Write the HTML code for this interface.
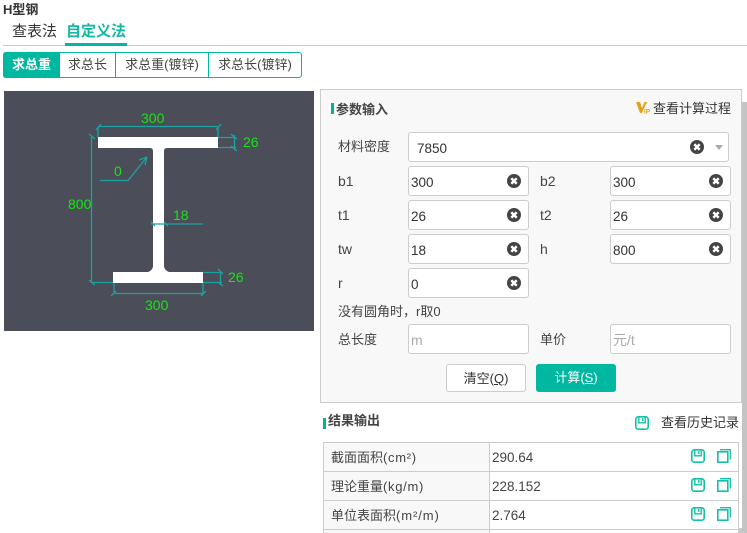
<!DOCTYPE html>
<html lang="zh">
<head>
<meta charset="utf-8">
<style>
html,body{margin:0;padding:0;background:#fff;}
body{width:747px;height:533px;overflow:hidden;position:relative;font-family:"Liberation Sans","Noto Sans CJK SC",sans-serif;font-size:13px;color:#333;}
.a{position:absolute;white-space:nowrap;}
.inp{position:absolute;box-sizing:border-box;width:121px;height:30px;background:#fff;border:1px solid #ccc;border-radius:3px;font-size:13.5px;line-height:31px;padding-left:2px;color:#333;}
.ph{color:#aaa;font-size:14px;}
.x{position:absolute;width:14px;height:14px;}
.lb{position:absolute;font-size:13px;line-height:16px;color:#444;white-space:nowrap;}
.ll{font-size:14px;margin-top:-1px;}
.btn{position:absolute;top:52px;height:26px;box-sizing:border-box;text-align:center;font-size:13px;color:#444;}
.cell{position:absolute;box-sizing:border-box;font-size:13px;color:#444;white-space:nowrap;}
.cell span{letter-spacing:.7px;}
</style>
</head>
<body>
<svg width="0" height="0" style="position:absolute">
<symbol id="xi" viewBox="0 0 14 14"><circle cx="7" cy="7" r="7" fill="#444"/><path d="M4.300 4.300L9.700 9.700M9.700 4.300L4.300 9.700" stroke="#fff" stroke-width="2.500" fill="none"/></symbol>
<symbol id="sv" viewBox="0 0 14 14"><rect x=".8" y=".8" width="12.400" height="12.400" rx="2.500" fill="none" stroke="#14c0a8" stroke-width="1.600"/><path d="M3.800 1V6.800H10.200V1M7.800 2V5" fill="none" stroke="#14c0a8" stroke-width="1.400"/></symbol>
<symbol id="cp" viewBox="0 0 14 14"><rect x=".8" y="2.800" width="10" height="10.400" fill="none" stroke="#14c0a8" stroke-width="1.600"/><path d="M3 .7H13.300V10.500" fill="none" stroke="#14c0a8" stroke-width="1.300"/></symbol>
</svg>

<div class="a" style="left:3px;top:2px;font-size:13px;font-weight:bold;line-height:16px;color:#333;">H型钢</div>
<div class="a" style="left:12px;top:23px;font-size:15px;line-height:18px;color:#333;">查表法</div>
<div class="a" style="left:66px;top:23px;font-size:15px;line-height:18px;color:#14b8a0;font-weight:bold;">自定义法</div>
<div class="a" style="left:3px;top:45px;width:744px;height:1px;background:#ccc;"></div>
<div class="a" style="left:65px;top:43px;width:62px;height:3px;background:#00b8a0;"></div>

<div class="a" style="left:3px;top:52px;width:299px;height:26px;box-sizing:border-box;border:1px solid #00b8a0;border-radius:3px;"></div>
<div class="btn" style="left:3px;width:57px;background:#00b8a0;color:#fff;font-weight:bold;border-radius:3px 0 0 3px;line-height:26px;">求总重</div>
<div class="btn" style="left:60px;width:55px;line-height:26px;">求总长</div>
<div class="a" style="left:115px;top:52px;width:1px;height:26px;background:#00b8a0;"></div>
<div class="btn" style="left:116px;width:92px;line-height:26px;">求总重(镀锌)</div>
<div class="a" style="left:208px;top:52px;width:1px;height:26px;background:#00b8a0;"></div>
<div class="btn" style="left:209px;width:92px;line-height:26px;">求总长(镀锌)</div>

<svg class="a" style="left:4px;top:91px;" width="310" height="240" viewBox="4 91 310 240">
<rect x="4" y="91" width="310" height="240" fill="#4b4d58"/>
<path d="M98 137H218V148H167Q164 148 164 151V266Q164 270 169 272H203V283H113V272H148Q153 270 153 266V151Q153 148 150 148H98Z" fill="#fff"/>
<g stroke="#1aa3a3" stroke-width="1.300" fill="none">
<path d="M98 126.500H218M98 127V137M218 127V137M96 130L101 124M216 130L221 124"/>
<path d="M218 137.500H236M218 147.500H236M234.500 135V150M231 134L237 139M231 146L237 151"/>
<path d="M91.500 137V283M89 134L95 139M89 280L95 285M91 282.500H113"/>
<path d="M100 180.500H128L147 157M147 157L139 160M147 157L145 165"/>
<path d="M151 224H203M151 222L155 226M164 222L168 226"/>
<path d="M203 272.500H222M203 282.500H222M220.500 271V285M218 269L223 274M218 282L223 286"/>
<path d="M114 283V294M203 283V294M114 293.500H203M111 296L116 291M201 296L206 291"/>
</g>
<g font-family="Liberation Sans,sans-serif" font-size="14" fill="#14e614">
<text x="141" y="123">300</text>
<text x="243" y="147">26</text>
<text x="68" y="209">800</text>
<text x="114" y="176">0</text>
<text x="173" y="220">18</text>
<text x="228" y="282">26</text>
<text x="145" y="310">300</text>
</g>
</svg>

<div class="a" style="left:320px;top:89px;width:422px;height:314px;box-sizing:border-box;background:#f8f8f8;border:1px solid #ccc;"></div>
<div class="a" style="left:742px;top:102px;width:5px;height:431px;background:#c4c4c4;"></div>
<div class="a" style="left:660px;top:528px;width:82px;height:5px;background:linear-gradient(to right,rgba(196,196,196,0),rgba(196,196,196,.9));"></div>
<div class="a" style="left:331px;top:103px;width:3px;height:11px;background:#00b48c;"></div>
<div class="a" style="left:336px;top:102px;font-size:13px;font-weight:bold;line-height:16px;color:#444;">参数输入</div>
<svg class="a" style="left:636px;top:101px;" width="16" height="14" viewBox="0 0 16 14"><path d="M0 1H4L6 7L8.500 1H11L5.800 12H4Z" fill="#e3a21a"/><text x="8" y="12.500" font-family="Liberation Sans,sans-serif" font-size="6.500" font-weight="bold" fill="#e3a21a">IP</text></svg>
<div class="a" style="left:653px;top:100px;font-size:13px;line-height:18px;color:#333;">查看计算过程</div>

<div class="lb" style="left:338px;top:139px;">材料密度</div>
<div class="inp" style="left:408px;top:132px;width:321px;padding-left:8px;">7850</div>
<svg class="x" style="left:690px;top:140px;"><use href="#xi"/></svg>
<div class="a" style="left:715px;top:145px;width:0;height:0;border-left:4px solid transparent;border-right:4px solid transparent;border-top:5px solid #aaa;"></div>

<div class="lb ll" style="left:338px;top:174px;">b1</div>
<div class="inp" style="left:408px;top:166px;">300</div>
<svg class="x" style="left:507px;top:174px;"><use href="#xi"/></svg>
<div class="lb ll" style="left:540px;top:174px;">b2</div>
<div class="inp" style="left:610px;top:166px;">300</div>
<svg class="x" style="left:709px;top:174px;"><use href="#xi"/></svg>

<div class="lb ll" style="left:338px;top:208px;">t1</div>
<div class="inp" style="left:408px;top:200px;">26</div>
<svg class="x" style="left:507px;top:208px;"><use href="#xi"/></svg>
<div class="lb ll" style="left:540px;top:208px;">t2</div>
<div class="inp" style="left:610px;top:200px;">26</div>
<svg class="x" style="left:709px;top:208px;"><use href="#xi"/></svg>

<div class="lb ll" style="left:338px;top:242px;">tw</div>
<div class="inp" style="left:408px;top:234px;">18</div>
<svg class="x" style="left:507px;top:242px;"><use href="#xi"/></svg>
<div class="lb ll" style="left:540px;top:242px;">h</div>
<div class="inp" style="left:610px;top:234px;">800</div>
<svg class="x" style="left:709px;top:242px;"><use href="#xi"/></svg>

<div class="lb ll" style="left:338px;top:276px;">r</div>
<div class="inp" style="left:408px;top:268px;">0</div>
<svg class="x" style="left:507px;top:276px;"><use href="#xi"/></svg>

<div class="lb" style="left:338px;top:304px;">没有圆角时，r取0</div>

<div class="lb" style="left:338px;top:332px;">总长度</div>
<div class="inp ph" style="left:408px;top:324px;">m</div>
<div class="lb" style="left:540px;top:332px;">单价</div>
<div class="inp ph" style="left:610px;top:324px;">元/t</div>

<div class="a" style="left:446px;top:364px;width:80px;height:28px;box-sizing:border-box;background:#fff;border:1px solid #ccc;border-radius:3px;text-align:center;line-height:27px;font-size:13px;color:#333;">清空(<u style="text-decoration:underline">Q</u>)</div>
<div class="a" style="left:536px;top:364px;width:80px;height:28px;background:#00b8a0;border-radius:3px;text-align:center;line-height:28px;font-size:13px;color:#fff;">计算(<u>S</u>)</div>

<div class="a" style="left:323px;top:418px;width:3px;height:11px;background:#00b48c;"></div>
<div class="a" style="left:328px;top:413px;font-size:13px;font-weight:bold;line-height:16px;color:#444;">结果输出</div>
<svg class="a" style="left:635px;top:416px;" width="14" height="14"><use href="#sv"/></svg>
<div class="a" style="left:661px;top:414px;font-size:13px;line-height:18px;color:#333;">查看历史记录</div>

<div class="a" style="left:323px;top:442px;width:416px;height:91px;box-sizing:border-box;border:1px solid #ccc;border-bottom:0;background:#fff;"></div>
<div class="a" style="left:324px;top:443px;width:165px;height:90px;background:#f8f8f8;"></div>
<div class="a" style="left:489px;top:442px;width:1px;height:91px;background:#ccc;"></div>
<div class="a" style="left:323px;top:471px;width:416px;height:1px;background:#ccc;"></div>
<div class="a" style="left:323px;top:500px;width:416px;height:1px;background:#ccc;"></div>
<div class="a" style="left:323px;top:529px;width:416px;height:1px;background:#ccc;"></div>

<div class="cell" style="left:331px;top:450px;line-height:16px;">截面面积<span>(cm²)</span></div>
<div class="cell" style="left:492px;top:449px;line-height:18px;font-size:13.5px;">290.64</div>
<svg class="a" style="left:691px;top:449px;" width="14" height="14"><use href="#sv"/></svg>
<svg class="a" style="left:717px;top:449px;" width="14" height="14"><use href="#cp"/></svg>

<div class="cell" style="left:331px;top:479px;line-height:16px;">理论重量<span>(kg/m)</span></div>
<div class="cell" style="left:492px;top:478px;line-height:18px;font-size:13.5px;">228.152</div>
<svg class="a" style="left:691px;top:478px;" width="14" height="14"><use href="#sv"/></svg>
<svg class="a" style="left:717px;top:478px;" width="14" height="14"><use href="#cp"/></svg>

<div class="cell" style="left:331px;top:508px;line-height:16px;">单位表面积<span style="letter-spacing:.9px">(m²/m)</span></div>
<div class="cell" style="left:492px;top:507px;line-height:18px;font-size:13.5px;">2.764</div>
<svg class="a" style="left:691px;top:507px;" width="14" height="14"><use href="#sv"/></svg>
<svg class="a" style="left:717px;top:507px;" width="14" height="14"><use href="#cp"/></svg>
</body>
</html>
